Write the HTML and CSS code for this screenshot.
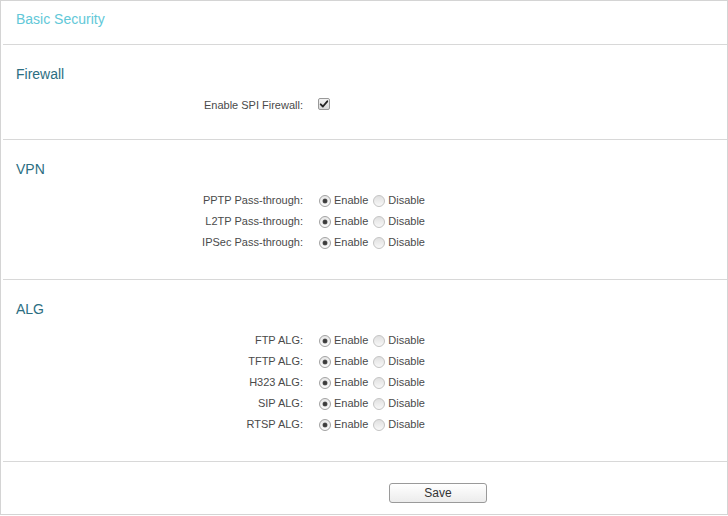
FILE: index.html
```html
<!DOCTYPE html>
<html lang="en">
<head>
<meta charset="utf-8">
<title>Basic Security</title>
<link rel="stylesheet" href="styles.css">
</head>
<body>
<div class="frame">
  <div class="title">Basic Security</div>

  <div class="section section--tight">
    <h3 class="heading">Firewall</h3>
    <div class="row">
      <span class="label">Enable SPI Firewall:</span>
      <span class="controls">
        <span class="cb"><svg width="10" height="10" viewBox="0 0 10 10"><path d="M1.7 5.3 L3.9 7.5 L8.3 2.3" fill="none" stroke="#222" stroke-width="1.8" stroke-linecap="round" stroke-linejoin="round"/></svg></span>
      </span>
    </div>
  </div>

  <div class="section">
    <h3 class="heading">VPN</h3>
    <div class="row">
      <span class="label">PPTP Pass-through:</span>
      <span class="controls"><span class="radio on"></span><span class="opt">Enable</span><span class="radio"></span><span class="opt">Disable</span></span>
    </div>
    <div class="row">
      <span class="label">L2TP Pass-through:</span>
      <span class="controls"><span class="radio on"></span><span class="opt">Enable</span><span class="radio"></span><span class="opt">Disable</span></span>
    </div>
    <div class="row">
      <span class="label">IPSec Pass-through:</span>
      <span class="controls"><span class="radio on"></span><span class="opt">Enable</span><span class="radio"></span><span class="opt">Disable</span></span>
    </div>
  </div>

  <div class="section">
    <h3 class="heading">ALG</h3>
    <div class="row">
      <span class="label">FTP ALG:</span>
      <span class="controls"><span class="radio on"></span><span class="opt">Enable</span><span class="radio"></span><span class="opt">Disable</span></span>
    </div>
    <div class="row">
      <span class="label">TFTP ALG:</span>
      <span class="controls"><span class="radio on"></span><span class="opt">Enable</span><span class="radio"></span><span class="opt">Disable</span></span>
    </div>
    <div class="row">
      <span class="label">H323 ALG:</span>
      <span class="controls"><span class="radio on"></span><span class="opt">Enable</span><span class="radio"></span><span class="opt">Disable</span></span>
    </div>
    <div class="row">
      <span class="label">SIP ALG:</span>
      <span class="controls"><span class="radio on"></span><span class="opt">Enable</span><span class="radio"></span><span class="opt">Disable</span></span>
    </div>
    <div class="row">
      <span class="label">RTSP ALG:</span>
      <span class="controls"><span class="radio on"></span><span class="opt">Enable</span><span class="radio"></span><span class="opt">Disable</span></span>
    </div>
  </div>

  <div class="footer">
    <button class="btn" type="button">Save</button>
  </div>
</div>
</body>
</html>
```
FILE: styles.css
```css
* { box-sizing: border-box; }

html, body {
  margin: 0;
  padding: 0;
  background: #ffffff;
}

body {
  font-family: "Liberation Sans", Arial, sans-serif;
  color: #4a4a4a;
}

.frame {
  width: 728px;
  height: 515px;
  border: 1px solid #d4d4d4;
  display: flex;
  flex-direction: column;
}

.title {
  height: 43px;
  padding: 10px 15px 0;
  font-size: 14px;
  line-height: 16px;
  color: #62c8d8;
}

.section {
  margin-left: 2px;
  border-top: 1px solid #d8d8d8;
  padding: 21px 0 26px;
}

.section--tight {
  padding-bottom: 23px;
}

.heading {
  margin: 0 0 13px;
  padding-left: 13px;
  font-size: 14px;
  line-height: 16px;
  font-weight: normal;
  color: #2c6e82;
}

.row {
  display: flex;
  align-items: center;
  height: 21px;
  font-size: 11px;
  line-height: 21px;
}

.label {
  width: 300px;
  text-align: right;
  color: #4a4a4a;
}

.controls {
  display: flex;
  align-items: center;
  margin-left: 15px;
}

.cb {
  width: 12px;
  height: 12px;
  margin-bottom: 4px;
  border: 1px solid #999999;
  border-radius: 2px;
  background: linear-gradient(#f2f2f2, #d8d8d8);
  display: flex;
  align-items: center;
  justify-content: center;
}

.cb svg { display: block; }

.radio {
  width: 12px;
  height: 12px;
  border-radius: 50%;
  border: 1px solid #c4c4c4;
  background: linear-gradient(#e0e0e0, #f8f8f8);
  display: flex;
  align-items: center;
  justify-content: center;
  margin-left: 1px;
}

.radio.on {
  border-color: #a2a2a2;
  background: linear-gradient(#e8e8e8, #fbfbfb);
}

.radio.on::after {
  content: "";
  width: 4px;
  height: 4px;
  border-radius: 50%;
  background: #3c3c3c;
  box-shadow: 0 0 0 0.5px #6a6a6a;
}

.opt {
  margin-left: 3px;
  margin-right: 4px;
  color: #4a4a4a;
}

.footer {
  margin-left: 2px;
  border-top: 1px solid #d8d8d8;
  padding: 21px 0 0 386px;
}

.btn {
  width: 98px;
  height: 20px;
  padding: 0;
  border: 1px solid #9a9a9a;
  border-radius: 3px;
  background: linear-gradient(#ffffff, #ececec);
  font-family: "Liberation Sans", Arial, sans-serif;
  font-size: 12px;
  color: #333333;
  line-height: 18px;
}
```
